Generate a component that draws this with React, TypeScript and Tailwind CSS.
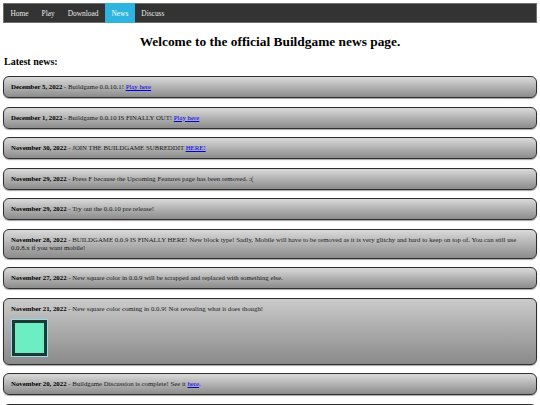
import React from "react";

const serif = { fontFamily: '"Liberation Serif", "Times New Roman", serif' };

function Box({ date, children }: { date: string; children: React.ReactNode }) {
  return (
    <div className="rounded-[6px] border border-[#2e2e2e] bg-gradient-to-b from-[#dadada] to-[#8c8c8c] px-[7px] py-[6px] text-[6.8px] leading-[8px] text-[#1a1a1a] shadow-[0_1px_1px_rgba(0,0,0,0.35)]">
      <b className="text-black">{date}</b> - {children}
    </div>
  );
}

function A({ children }: { children: React.ReactNode }) {
  return <a href="#" className="text-[#0000ee] underline">{children}</a>;
}

export default function App() {
  const nav = ["Home", "Play", "Download", "News", "Discuss"];
  return (
    <div className="bg-white px-[3px] pt-[3px] overflow-hidden h-[405px]" style={serif}>
      <div className="flex h-[20px] border border-[#6f6f6f] bg-[#333333] text-[7.4px] leading-[9px] text-[#e8e8e8]">
        {nav.map((n) => (
          <div
            key={n}
            className={
              n === "News"
                ? "flex items-center px-[6.5px] bg-[#2fb4df] text-white -my-px"
                : "flex items-center px-[6.5px]"
            }
          >
            {n}
          </div>
        ))}
      </div>
      <h1 className="mt-[10.5px] text-center text-[13.4px] leading-[15px] font-bold text-black">
        Welcome to the official Buildgame news page.
      </h1>
      <h2 className="mt-[7.5px] ml-[1px] text-[10px] leading-[12px] font-bold text-black">Latest news:</h2>
      <div className="mt-[8px] flex flex-col gap-[8.5px]">
        <Box date="December 5, 2022">
          Buildgame 0.0.10.1! <A>Play here</A>
        </Box>
        <Box date="December 1, 2022">
          Buildgame 0.0.10 IS FINALLY OUT! <A>Play here</A>
        </Box>
        <Box date="November 30, 2022">
          JOIN THE BUILDGAME SUBREDDIT <A>HERE!</A>
        </Box>
        <Box date="November 29, 2022">
          Press F because the Upcoming Features page has been removed. :(
        </Box>
        <Box date="November 29, 2022">Try out the 0.0.10 pre release!</Box>
        <Box date="November 28, 2022">
          BUILDGAME 0.0.9 IS FINALLY HERE! New block type! Sadly, Mobile will have to be removed as it is very glitchy and hard to keep on top of. You can still use 0.0.8.x if you want mobile!
        </Box>
        <Box date="November 27, 2022">
          New square color in 0.0.9 will be scrapped and replaced with something else.
        </Box>
        <div className="rounded-[6px] border border-[#2e2e2e] bg-gradient-to-b from-[#cbcbcb] to-[#8a8a8a] px-[7px] pt-[6px] pb-[7px] text-[6.8px] leading-[8px] text-[#1a1a1a] shadow-[0_1px_1px_rgba(0,0,0,0.35)]">
          <div>
            <b className="text-black">November 21, 2022</b> - New square color coming in 0.0.9! Not revealing what it does though!
          </div>
          <div className="mt-[6px] w-[37px] h-[38px] border-[1.5px] border-[#9bd9ef]">
            <div className="w-full h-full border-[3px] border-[#1c3a33] bg-[#6ceec2]" />
          </div>
        </div>
        <Box date="November 20, 2022">
          Buildgame Discussion is complete! See it <A>here</A>.
        </Box>
        <Box date="November 19, 2022">Buildgame news page is now live!</Box>
      </div>
    </div>
  );
}
